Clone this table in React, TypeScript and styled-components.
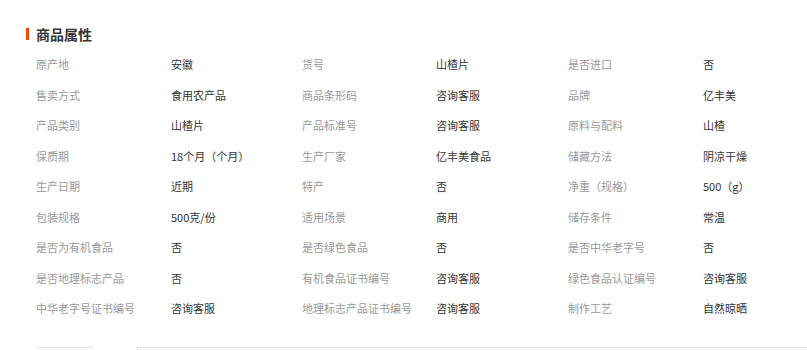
import React from "react";
import styled, { createGlobalStyle } from "styled-components";

const Global = createGlobalStyle`
  html, body { margin: 0; padding: 0; background: #fff; }
  body { font-family: "Microsoft YaHei", "Noto Sans CJK SC", "Liberation Sans", sans-serif; overflow: hidden; }
`;

const Page = styled.div`
  width: 807px;
  height: 350px;
  overflow: hidden;
  padding-top: 25px;
  box-sizing: border-box;
`;

const Title = styled.h3`
  margin: 0 0 0 26px;
  display: flex;
  align-items: center;
  gap: 7px;
  height: 18px;
  font-size: 14px;
  font-weight: bold;
  color: #333;
  line-height: 18px;
  &::before {
    content: "";
    width: 3px;
    height: 12px;
    background: #ff4400;
  }
`;

const Grid = styled.div`
  margin: 6px 0 0 36px;
  display: grid;
  grid-template-columns: 135px 131px 134px 132px 135px 1fr;
  grid-auto-rows: 30.5px;
  align-items: center;
  font-size: 11px;
  line-height: 16px;
`;

const Label = styled.div`
  color: #999;
  white-space: nowrap;
`;

const Value = styled.div`
  color: #333;
  white-space: nowrap;
`;

const Bottom = styled.div`
  margin-top: 23px;
  display: flex;
  gap: 45px;
  padding-left: 35px;
`;

const Box = styled.div<{ $w?: string }>`
  height: 40px;
  border: 1px solid #e3e3e3;
  border-left-color: #fff;
  width: ${(p) => p.$w ?? "auto"};
  flex: ${(p) => (p.$w ? "none" : "1")};
  box-sizing: border-box;
`;

const WideBox = styled(Box)`
  border-left-color: #e3e3e3;
  border-right: none;
  margin-right: -10px;
`;

const rows: [string, string][][] = [
  [["原产地", "安徽"], ["货号", "山楂片"], ["是否进口", "否"]],
  [["售卖方式", "食用农产品"], ["商品条形码", "咨询客服"], ["品牌", "亿丰美"]],
  [["产品类别", "山楂片"], ["产品标准号", "咨询客服"], ["原料与配料", "山楂"]],
  [["保质期", "18个月（个月）"], ["生产厂家", "亿丰美食品"], ["储藏方法", "阴凉干燥"]],
  [["生产日期", "近期"], ["特产", "否"], ["净重（规格）", "500（g）"]],
  [["包装规格", "500克/份"], ["适用场景", "商用"], ["储存条件", "常温"]],
  [["是否为有机食品", "否"], ["是否绿色食品", "否"], ["是否中华老字号", "否"]],
  [["是否地理标志产品", "否"], ["有机食品证书编号", "咨询客服"], ["绿色食品认证编号", "咨询客服"]],
  [["中华老字号证书编号", "咨询客服"], ["地理标志产品证书编号", "咨询客服"], ["制作工艺", "自然晾晒"]],
];

export default function App() {
  return (
    <Page>
      <Global />
      <Title>商品属性</Title>
      <Grid>
        {rows.flatMap((row, i) =>
          row.flatMap(([k, v], j) => [
            <Label key={`k${i}-${j}`}>{k}</Label>,
            <Value key={`v${i}-${j}`}>{v}</Value>,
          ])
        )}
      </Grid>
      <Bottom>
        <Box $w="57px" />
        <WideBox />
      </Bottom>
    </Page>
  );
}
